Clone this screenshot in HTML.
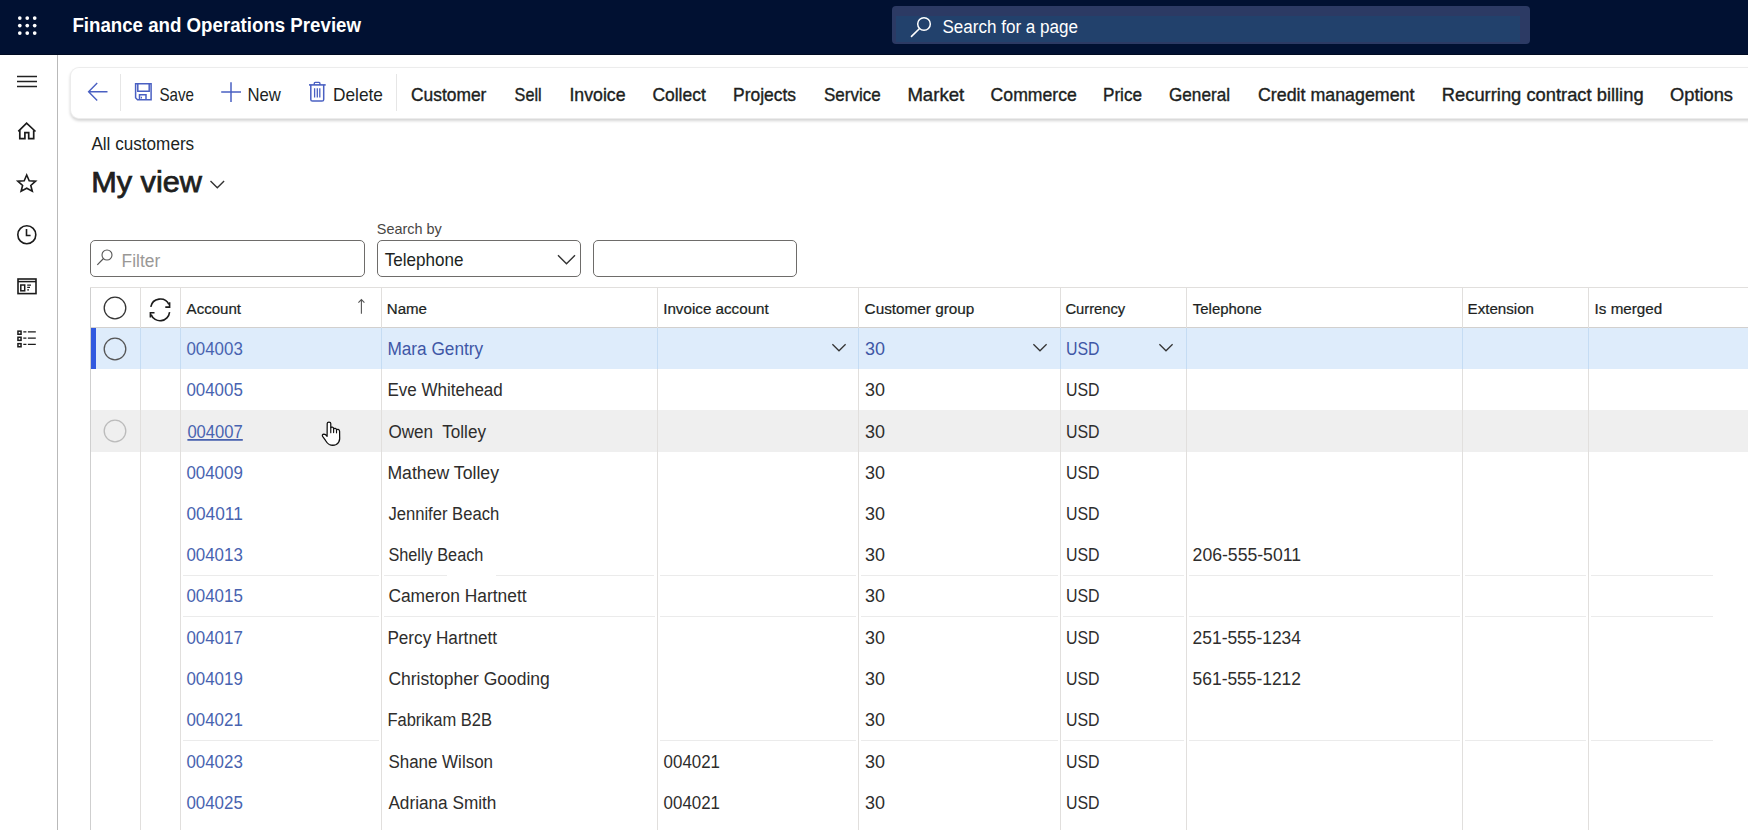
<!DOCTYPE html>
<html><head><meta charset="utf-8"><title>All customers</title>
<style>
html,body{margin:0;padding:0;}
body{width:1748px;height:830px;overflow:hidden;position:relative;background:#fff;font-family:"Liberation Sans", sans-serif;}
.r{position:absolute;display:block;}
#txt{position:absolute;left:0;top:0;}
</style></head><body>
<div class="r" style="left:0px;top:0px;width:1748px;height:55px;background:#011132"></div>
<div class="r" style="left:0px;top:54px;width:1748px;height:1px;background:#000b22"></div>
<svg class="r" style="left:0px;top:0px;" width="56" height="54" viewBox="0 0 56 54" fill="none"><circle cx="19.80" cy="18.10" r="1.85" fill="#fff"/><circle cx="19.80" cy="25.60" r="1.85" fill="#fff"/><circle cx="19.80" cy="33.10" r="1.85" fill="#fff"/><circle cx="27.25" cy="18.10" r="1.85" fill="#fff"/><circle cx="27.25" cy="25.60" r="1.85" fill="#fff"/><circle cx="27.25" cy="33.10" r="1.85" fill="#fff"/><circle cx="34.70" cy="18.10" r="1.85" fill="#fff"/><circle cx="34.70" cy="25.60" r="1.85" fill="#fff"/><circle cx="34.70" cy="33.10" r="1.85" fill="#fff"/></svg>
<div class="r" style="left:892px;top:6px;width:638px;height:38px;background:#2c3a64;border-radius:4px"></div>
<div class="r" style="left:896px;top:16px;width:624px;height:26px;background:#22416c"></div>
<svg class="r" style="left:900px;top:8px;" width="36" height="36" viewBox="0 0 36 36" fill="none"><circle cx="24" cy="16" r="6.3" stroke="#fff" stroke-width="1.5"/><path d="M19.3 20.7 L11.5 28.4" stroke="#fff" stroke-width="1.6" stroke-linecap="round"/></svg>
<div class="r" style="left:57px;top:55px;width:1px;height:775px;background:#b9b9b9"></div>
<svg class="r" style="left:14px;top:70px;" width="28" height="24" viewBox="0 0 28 24" fill="none"><path d="M3 6.5H23M3 11.5H23M3 16.5H23" stroke="#222" stroke-width="1.4"/></svg>
<svg class="r" style="left:14px;top:120px;" width="28" height="24" viewBox="0 0 28 24" fill="none"><path d="M4.3 11.4 L12.6 3.1 L21.5 11.5" stroke="#1b1b1b" stroke-width="1.7"/><path d="M5.8 10.3 V18.6 H10.9 V12.6 H14.7 V18.6 H19.7 V10.3" stroke="#1b1b1b" stroke-width="1.7"/></svg>
<svg class="r" style="left:14px;top:170px;" width="28" height="26" viewBox="0 0 28 26" fill="none"><path d="M12.7 5 L15.2 10.7 L21.6 11.1 L16.8 15.4 L18.3 21.2 L12.7 18.2 L7.1 21.2 L8.6 15.4 L3.8 11.1 L10.2 10.7 Z" stroke="#1b1b1b" stroke-width="1.6" stroke-linejoin="miter"/></svg>
<svg class="r" style="left:14px;top:222px;" width="28" height="26" viewBox="0 0 28 26" fill="none"><circle cx="12.8" cy="12.8" r="9" stroke="#1b1b1b" stroke-width="1.6"/><path d="M12.5 7 V13.5 H16.6" stroke="#1b1b1b" stroke-width="1.6"/></svg>
<svg class="r" style="left:14px;top:275px;" width="28" height="24" viewBox="0 0 28 24" fill="none"><rect x="4" y="4" width="18" height="14.6" stroke="#1b1b1b" stroke-width="1.6"/><path d="M4 6.6 H22" stroke="#1b1b1b" stroke-width="1.5"/><rect x="6.8" y="10" width="3.9" height="5.8" stroke="#1b1b1b" stroke-width="1.5"/><path d="M13.2 10.1H17M13.2 12.4H16M13.2 14.9H15" stroke="#1b1b1b" stroke-width="1.2"/></svg>
<svg class="r" style="left:14px;top:327px;" width="28" height="24" viewBox="0 0 28 24" fill="none"><rect x="3.95" y="4.15" width="3.1" height="3.1" stroke="#1b1b1b" stroke-width="1.5"/><rect x="3.95" y="10.25" width="3.1" height="3.1" stroke="#1b1b1b" stroke-width="1.5"/><rect x="3.95" y="16.65" width="3.1" height="3.1" stroke="#1b1b1b" stroke-width="1.5"/><path d="M9.3 4.9H12.4M13.9 4.9H21.8M9.3 11.1H12.4M13.9 11.1H21.8M9.3 17.4H12.4M13.9 17.4H21.8" stroke="#1b1b1b" stroke-width="1.3"/></svg>
<div class="r" style="left:70px;top:67px;width:1700px;height:52px;background:#fff;border:1px solid #ececec;border-right:none;border-radius:9px 0 0 9px;box-sizing:border-box;box-shadow:0 2px 3px rgba(0,0,0,0.17)"></div>
<svg class="r" style="left:84px;top:78px;" width="30" height="28" viewBox="0 0 30 28" fill="none"><path d="M23.5 13.8 H5 M13.2 5 L4.6 13.8 L13.2 22.4" stroke="#4a60c2" stroke-width="1.4" stroke-linejoin="miter"/></svg>
<div class="r" style="left:120px;top:74px;width:1px;height:37px;background:#e6e6e6"></div>
<svg class="r" style="left:133px;top:81px;" width="22" height="22" viewBox="0 0 22 22" fill="none"><path d="M2.6 2.8 H18.1 V18.7 H4.5 L2.6 16.8 Z" stroke="#4a60c2" stroke-width="1.5" stroke-linejoin="miter"/><path d="M4.8 2.8 V10.3 H16.2 V2.8" stroke="#4a60c2" stroke-width="1.5"/><path d="M6.5 18.7 V13.8 H13 V18.7" stroke="#4a60c2" stroke-width="1.5"/><path d="M8.4 15.8 V17.5" stroke="#4a60c2" stroke-width="1.2"/></svg>
<svg class="r" style="left:219px;top:80px;" width="24" height="24" viewBox="0 0 24 24" fill="none"><path d="M12 2.2 V22 M2.2 12 H22" stroke="#4a60c2" stroke-width="1.5"/></svg>
<svg class="r" style="left:307px;top:80px;" width="22" height="24" viewBox="0 0 22 24" fill="none"><path d="M2 4.9 H18.7" stroke="#4a60c2" stroke-width="1.6"/><path d="M7.3 4.9 V3.2 Q7.3 2.4 8.1 2.4 H12.1 Q12.9 2.4 12.9 3.2 V4.9" stroke="#4a60c2" stroke-width="1.4"/><path d="M3.8 4.9 V19.4 Q3.8 21.1 5.5 21.1 H15 Q16.7 21.1 16.7 19.4 V4.9" stroke="#4a60c2" stroke-width="1.5"/><path d="M7.6 8.2 V17.6 M10.3 8.2 V17.6 M12.8 8.2 V17.6" stroke="#4a60c2" stroke-width="1.3"/></svg>
<div class="r" style="left:396px;top:74px;width:1px;height:37px;background:#e6e6e6"></div>
<svg class="r" style="left:206px;top:176px;" width="22" height="16" viewBox="0 0 22 16" fill="none"><path d="M4.5 5 L11.3 11.8 L18.1 5" stroke="#333" stroke-width="1.4"/></svg>
<div class="r" style="left:90px;top:240px;width:275px;height:37px;border:1px solid #6e6c6a;border-radius:5px;box-sizing:border-box;background:#fff"></div>
<svg class="r" style="left:94px;top:246px;" width="24" height="24" viewBox="0 0 24 24" fill="none"><circle cx="13" cy="9" r="5" stroke="#555" stroke-width="1.1"/><path d="M9.5 12.5 L3.3 18.8" stroke="#555" stroke-width="1.2"/></svg>
<div class="r" style="left:377px;top:240px;width:204px;height:37px;border:1px solid #6e6c6a;border-radius:5px;box-sizing:border-box;background:#fff"></div>
<svg class="r" style="left:552px;top:248px;" width="28" height="22" viewBox="0 0 28 22" fill="none"><path d="M6 7.2 L14.5 15.8 L23 7.2" stroke="#333" stroke-width="1.4"/></svg>
<div class="r" style="left:593px;top:240px;width:204px;height:37px;border:1px solid #6e6c6a;border-radius:5px;box-sizing:border-box;background:#fff"></div>
<div class="r" style="left:90px;top:287px;width:1658px;height:1px;background:#e1dfdd"></div>
<div class="r" style="left:90px;top:327px;width:1658px;height:1px;background:#d2d0ce"></div>
<div class="r" style="left:91px;top:328px;width:1657px;height:41px;background:#deecfb"></div>
<div class="r" style="left:91px;top:328px;width:5px;height:41px;background:#3159df"></div>
<div class="r" style="left:91px;top:410px;width:1657px;height:42px;background:#efefef"></div>
<div class="r" style="left:183px;top:575px;width:196px;height:1px;background:#ebebeb"></div>
<div class="r" style="left:384px;top:575px;width:63px;height:1px;background:#ebebeb"></div>
<div class="r" style="left:496px;top:575px;width:158px;height:1px;background:#ebebeb"></div>
<div class="r" style="left:660px;top:575px;width:196px;height:1px;background:#ebebeb"></div>
<div class="r" style="left:861px;top:575px;width:197px;height:1px;background:#ebebeb"></div>
<div class="r" style="left:1063px;top:575px;width:121px;height:1px;background:#ebebeb"></div>
<div class="r" style="left:1189px;top:575px;width:271px;height:1px;background:#ebebeb"></div>
<div class="r" style="left:1465px;top:575px;width:121px;height:1px;background:#ebebeb"></div>
<div class="r" style="left:1591px;top:575px;width:122px;height:1px;background:#ebebeb"></div>
<div class="r" style="left:183px;top:616px;width:196px;height:1px;background:#ebebeb"></div>
<div class="r" style="left:384px;top:616px;width:271px;height:1px;background:#ebebeb"></div>
<div class="r" style="left:660px;top:616px;width:196px;height:1px;background:#ebebeb"></div>
<div class="r" style="left:861px;top:616px;width:197px;height:1px;background:#ebebeb"></div>
<div class="r" style="left:1063px;top:616px;width:121px;height:1px;background:#ebebeb"></div>
<div class="r" style="left:1189px;top:616px;width:271px;height:1px;background:#ebebeb"></div>
<div class="r" style="left:1465px;top:616px;width:121px;height:1px;background:#ebebeb"></div>
<div class="r" style="left:1591px;top:616px;width:122px;height:1px;background:#ebebeb"></div>
<div class="r" style="left:183px;top:740px;width:196px;height:1px;background:#ebebeb"></div>
<div class="r" style="left:660px;top:740px;width:196px;height:1px;background:#ebebeb"></div>
<div class="r" style="left:861px;top:740px;width:197px;height:1px;background:#ebebeb"></div>
<div class="r" style="left:1063px;top:740px;width:121px;height:1px;background:#ebebeb"></div>
<div class="r" style="left:1189px;top:740px;width:271px;height:1px;background:#ebebeb"></div>
<div class="r" style="left:1465px;top:740px;width:121px;height:1px;background:#ebebeb"></div>
<div class="r" style="left:1591px;top:740px;width:122px;height:1px;background:#ebebeb"></div>
<div class="r" style="left:90px;top:288px;width:1px;height:542px;background:#cfcfcf"></div>
<div class="r" style="left:140px;top:288px;width:1px;height:542px;background:#e1dfdd"></div>
<div class="r" style="left:180px;top:288px;width:1px;height:542px;background:#e1dfdd"></div>
<div class="r" style="left:381px;top:288px;width:1px;height:542px;background:#e1dfdd"></div>
<div class="r" style="left:657px;top:288px;width:1px;height:542px;background:#e1dfdd"></div>
<div class="r" style="left:858px;top:288px;width:1px;height:542px;background:#e1dfdd"></div>
<div class="r" style="left:1060px;top:288px;width:1px;height:542px;background:#e1dfdd"></div>
<div class="r" style="left:1186px;top:288px;width:1px;height:542px;background:#e1dfdd"></div>
<div class="r" style="left:1462px;top:288px;width:1px;height:542px;background:#e1dfdd"></div>
<div class="r" style="left:1588px;top:288px;width:1px;height:542px;background:#e1dfdd"></div>
<div class="r" style="left:140px;top:328px;width:1px;height:41px;background:#c5dcf3"></div>
<div class="r" style="left:180px;top:328px;width:1px;height:41px;background:#c5dcf3"></div>
<div class="r" style="left:381px;top:328px;width:1px;height:41px;background:#c5dcf3"></div>
<div class="r" style="left:657px;top:328px;width:1px;height:41px;background:#c5dcf3"></div>
<div class="r" style="left:858px;top:328px;width:1px;height:41px;background:#c5dcf3"></div>
<div class="r" style="left:1060px;top:328px;width:1px;height:41px;background:#c5dcf3"></div>
<div class="r" style="left:1186px;top:328px;width:1px;height:41px;background:#c5dcf3"></div>
<div class="r" style="left:1462px;top:328px;width:1px;height:41px;background:#c5dcf3"></div>
<div class="r" style="left:1588px;top:328px;width:1px;height:41px;background:#c5dcf3"></div>
<svg class="r" style="left:100px;top:293px;" width="30" height="30" viewBox="0 0 30 30" fill="none"><circle cx="15" cy="15" r="10.8" stroke="#333" stroke-width="1.3"/></svg>
<svg class="r" style="left:146px;top:295px;" width="28" height="28" viewBox="0 0 28 28" fill="none"><path d="M4.8 11.9 A9.6 9.6 0 0 1 22.9 9.5" stroke="#1b1b1b" stroke-width="1.6"/><path d="M19.3 12.1 H23.6 V7.3" stroke="#1b1b1b" stroke-width="1.6"/><path d="M23.6 17.2 A9.6 9.6 0 0 1 5.1 19.6" stroke="#1b1b1b" stroke-width="1.6"/><path d="M8.5 17.7 H4.4 V22.5" stroke="#1b1b1b" stroke-width="1.6"/></svg>
<svg class="r" style="left:353px;top:297px;" width="16" height="20" viewBox="0 0 16 20" fill="none"><path d="M8.4 2.6 V16.7 M5.4 5.6 L8.4 2.6 L11.4 5.6" stroke="#555" stroke-width="1.1"/></svg>
<svg class="r" style="left:100px;top:334px;" width="30" height="30" viewBox="0 0 30 30" fill="none"><circle cx="15" cy="15" r="10.8" stroke="#555" stroke-width="1.3"/></svg>
<svg class="r" style="left:100px;top:416px;" width="30" height="30" viewBox="0 0 30 30" fill="none"><circle cx="15" cy="15" r="10.8" stroke="#bbb" stroke-width="1.3"/></svg>
<svg class="r" style="left:830px;top:337px;" width="20" height="20" viewBox="0 0 20 20" fill="none"><path d="M2.4 7.2 L9 13.8 L15.6 7.2" stroke="#333" stroke-width="1.25"/></svg>
<svg class="r" style="left:1031px;top:337px;" width="20" height="20" viewBox="0 0 20 20" fill="none"><path d="M2.4 7.2 L9 13.8 L15.6 7.2" stroke="#333" stroke-width="1.25"/></svg>
<svg class="r" style="left:1157px;top:337px;" width="20" height="20" viewBox="0 0 20 20" fill="none"><path d="M2.4 7.2 L9 13.8 L15.6 7.2" stroke="#333" stroke-width="1.25"/></svg>
<svg class="r" style="left:310px;top:410px;" width="40" height="40" viewBox="0 0 830 830" fill="none"><path d="M355 545 L357 282 Q357 250 394 250 Q431 250 431 282 L431 368 Q440 352 463 355 Q490 360 490 388 L490 395 Q500 378 524 383 Q550 390 550 412 Q562 396 586 402 Q614 410 614 442 L616 600 Q610 680 545 715 Q470 748 400 715 Q355 690 322 632 L262 548 Q242 510 290 503 Q322 503 355 545 Z" fill="#fff" stroke="#111" stroke-width="26" stroke-linejoin="round"/><path d="M431 368 V470 M490 395 V468 M550 412 V474" stroke="#111" stroke-width="24" stroke-linecap="round"/></svg>
<svg id="txt" width="1748" height="830" viewBox="0 0 1748 830" font-family='"Liberation Sans", sans-serif'>
<text x="72.40" y="32" font-size="19.5" fill="#fff" textLength="288.60" lengthAdjust="spacingAndGlyphs" font-weight="bold">Finance and Operations Preview</text>
<text x="942.40" y="33" font-size="18" fill="#fff" textLength="135.60" lengthAdjust="spacingAndGlyphs">Search for a page</text>
<text x="159.40" y="101" font-size="17.8" fill="#201f1e" textLength="34.60" lengthAdjust="spacingAndGlyphs">Save</text>
<text x="247.40" y="101" font-size="17.8" fill="#201f1e" textLength="33.40" lengthAdjust="spacingAndGlyphs">New</text>
<text x="333.00" y="101" font-size="17.8" fill="#201f1e" textLength="50.00" lengthAdjust="spacingAndGlyphs">Delete</text>
<text x="411.00" y="101" font-size="18.2" fill="#201f1e" textLength="75.40" lengthAdjust="spacingAndGlyphs" stroke="#201f1e" stroke-width="0.38">Customer</text>
<text x="514.60" y="101" font-size="18.2" fill="#201f1e" textLength="27.00" lengthAdjust="spacingAndGlyphs" stroke="#201f1e" stroke-width="0.38">Sell</text>
<text x="569.40" y="101" font-size="18.2" fill="#201f1e" textLength="56.20" lengthAdjust="spacingAndGlyphs" stroke="#201f1e" stroke-width="0.38">Invoice</text>
<text x="652.40" y="101" font-size="18.2" fill="#201f1e" textLength="53.40" lengthAdjust="spacingAndGlyphs" stroke="#201f1e" stroke-width="0.38">Collect</text>
<text x="733.00" y="101" font-size="18.2" fill="#201f1e" textLength="63.00" lengthAdjust="spacingAndGlyphs" stroke="#201f1e" stroke-width="0.38">Projects</text>
<text x="824.00" y="101" font-size="18.2" fill="#201f1e" textLength="56.60" lengthAdjust="spacingAndGlyphs" stroke="#201f1e" stroke-width="0.38">Service</text>
<text x="907.40" y="101" font-size="18.2" fill="#201f1e" textLength="56.80" lengthAdjust="spacingAndGlyphs" stroke="#201f1e" stroke-width="0.38">Market</text>
<text x="990.60" y="101" font-size="18.2" fill="#201f1e" textLength="86.20" lengthAdjust="spacingAndGlyphs" stroke="#201f1e" stroke-width="0.38">Commerce</text>
<text x="1103.00" y="101" font-size="18.2" fill="#201f1e" textLength="39.00" lengthAdjust="spacingAndGlyphs" stroke="#201f1e" stroke-width="0.38">Price</text>
<text x="1169.00" y="101" font-size="18.2" fill="#201f1e" textLength="61.00" lengthAdjust="spacingAndGlyphs" stroke="#201f1e" stroke-width="0.38">General</text>
<text x="1258.00" y="101" font-size="18.2" fill="#201f1e" textLength="156.40" lengthAdjust="spacingAndGlyphs" stroke="#201f1e" stroke-width="0.38">Credit management</text>
<text x="1441.80" y="101" font-size="18.2" fill="#201f1e" textLength="201.80" lengthAdjust="spacingAndGlyphs" stroke="#201f1e" stroke-width="0.38">Recurring contract billing</text>
<text x="1670.00" y="101" font-size="18.2" fill="#201f1e" textLength="63.00" lengthAdjust="spacingAndGlyphs" stroke="#201f1e" stroke-width="0.38">Options</text>
<text x="91.40" y="150" font-size="18" fill="#201f1e" textLength="102.80" lengthAdjust="spacingAndGlyphs">All customers</text>
<text x="91.20" y="192" font-size="28.8" fill="#201f1e" textLength="110.80" lengthAdjust="spacingAndGlyphs" stroke="#201f1e" stroke-width="0.75">My view</text>
<text x="121.60" y="267" font-size="18" fill="#9a9896" textLength="38.60" lengthAdjust="spacingAndGlyphs">Filter</text>
<text x="376.80" y="234" font-size="14.8" fill="#484644" textLength="65.00" lengthAdjust="spacingAndGlyphs">Search by</text>
<text x="384.80" y="266" font-size="17.8" fill="#201f1e" textLength="78.80" lengthAdjust="spacingAndGlyphs">Telephone</text>
<text x="186.60" y="314" font-size="15.3" fill="#201f1e" textLength="54.40" lengthAdjust="spacingAndGlyphs" stroke="#201f1e" stroke-width="0.22">Account</text>
<text x="386.80" y="314" font-size="15.3" fill="#201f1e" textLength="40.20" lengthAdjust="spacingAndGlyphs" stroke="#201f1e" stroke-width="0.22">Name</text>
<text x="663.20" y="314" font-size="15.3" fill="#201f1e" textLength="105.60" lengthAdjust="spacingAndGlyphs" stroke="#201f1e" stroke-width="0.22">Invoice account</text>
<text x="864.60" y="314" font-size="15.3" fill="#201f1e" textLength="109.80" lengthAdjust="spacingAndGlyphs" stroke="#201f1e" stroke-width="0.22">Customer group</text>
<text x="1065.40" y="314" font-size="15.3" fill="#201f1e" textLength="59.80" lengthAdjust="spacingAndGlyphs" stroke="#201f1e" stroke-width="0.22">Currency</text>
<text x="1192.80" y="314" font-size="15.3" fill="#201f1e" textLength="69.00" lengthAdjust="spacingAndGlyphs" stroke="#201f1e" stroke-width="0.22">Telephone</text>
<text x="1467.60" y="314" font-size="15.3" fill="#201f1e" textLength="66.40" lengthAdjust="spacingAndGlyphs" stroke="#201f1e" stroke-width="0.22">Extension</text>
<text x="1594.60" y="314" font-size="15.3" fill="#201f1e" textLength="67.60" lengthAdjust="spacingAndGlyphs" stroke="#201f1e" stroke-width="0.22">Is merged</text>
<text x="186.40" y="355" font-size="17.6" fill="#4863b0" textLength="56.40" lengthAdjust="spacingAndGlyphs">004003</text>
<text x="387.40" y="355" font-size="17.6" fill="#3f57a6" textLength="95.80" lengthAdjust="spacingAndGlyphs" xml:space="preserve">Mara Gentry</text>
<text x="865.00" y="355" font-size="17.6" fill="#3f57a6" textLength="20.00" lengthAdjust="spacingAndGlyphs">30</text>
<text x="1066.00" y="355" font-size="17.6" fill="#3f57a6" textLength="33.60" lengthAdjust="spacingAndGlyphs">USD</text>
<text x="186.40" y="396" font-size="17.6" fill="#4863b0" textLength="56.40" lengthAdjust="spacingAndGlyphs">004005</text>
<text x="387.40" y="396" font-size="17.6" fill="#2e2d2c" textLength="115.40" lengthAdjust="spacingAndGlyphs" xml:space="preserve">Eve Whitehead</text>
<text x="865.00" y="396" font-size="17.6" fill="#2e2d2c" textLength="20.00" lengthAdjust="spacingAndGlyphs">30</text>
<text x="1066.00" y="396" font-size="17.6" fill="#2e2d2c" textLength="33.60" lengthAdjust="spacingAndGlyphs">USD</text>
<text x="187.40" y="438" font-size="17.6" fill="#4863b0" textLength="55.40" lengthAdjust="spacingAndGlyphs" text-decoration="underline">004007</text>
<text x="388.40" y="438" font-size="17.6" fill="#2e2d2c" textLength="97.60" lengthAdjust="spacingAndGlyphs" xml:space="preserve">Owen  Tolley</text>
<text x="865.00" y="438" font-size="17.6" fill="#2e2d2c" textLength="20.00" lengthAdjust="spacingAndGlyphs">30</text>
<text x="1066.00" y="438" font-size="17.6" fill="#2e2d2c" textLength="33.60" lengthAdjust="spacingAndGlyphs">USD</text>
<text x="186.40" y="479" font-size="17.6" fill="#4863b0" textLength="56.40" lengthAdjust="spacingAndGlyphs">004009</text>
<text x="387.40" y="479" font-size="17.6" fill="#2e2d2c" textLength="111.60" lengthAdjust="spacingAndGlyphs" xml:space="preserve">Mathew Tolley</text>
<text x="865.00" y="479" font-size="17.6" fill="#2e2d2c" textLength="20.00" lengthAdjust="spacingAndGlyphs">30</text>
<text x="1066.00" y="479" font-size="17.6" fill="#2e2d2c" textLength="33.60" lengthAdjust="spacingAndGlyphs">USD</text>
<text x="186.40" y="520" font-size="17.6" fill="#4863b0" textLength="56.40" lengthAdjust="spacingAndGlyphs">004011</text>
<text x="388.40" y="520" font-size="17.6" fill="#2e2d2c" textLength="110.80" lengthAdjust="spacingAndGlyphs" xml:space="preserve">Jennifer Beach</text>
<text x="865.00" y="520" font-size="17.6" fill="#2e2d2c" textLength="20.00" lengthAdjust="spacingAndGlyphs">30</text>
<text x="1066.00" y="520" font-size="17.6" fill="#2e2d2c" textLength="33.60" lengthAdjust="spacingAndGlyphs">USD</text>
<text x="186.40" y="561" font-size="17.6" fill="#4863b0" textLength="56.40" lengthAdjust="spacingAndGlyphs">004013</text>
<text x="388.40" y="561" font-size="17.6" fill="#2e2d2c" textLength="95.00" lengthAdjust="spacingAndGlyphs" xml:space="preserve">Shelly Beach</text>
<text x="865.00" y="561" font-size="17.6" fill="#2e2d2c" textLength="20.00" lengthAdjust="spacingAndGlyphs">30</text>
<text x="1066.00" y="561" font-size="17.6" fill="#2e2d2c" textLength="33.60" lengthAdjust="spacingAndGlyphs">USD</text>
<text x="1192.60" y="561" font-size="17.6" fill="#2e2d2c" textLength="108.40" lengthAdjust="spacingAndGlyphs">206-555-5011</text>
<text x="186.40" y="602" font-size="17.6" fill="#4863b0" textLength="56.40" lengthAdjust="spacingAndGlyphs">004015</text>
<text x="388.40" y="602" font-size="17.6" fill="#2e2d2c" textLength="138.20" lengthAdjust="spacingAndGlyphs" xml:space="preserve">Cameron Hartnett</text>
<text x="865.00" y="602" font-size="17.6" fill="#2e2d2c" textLength="20.00" lengthAdjust="spacingAndGlyphs">30</text>
<text x="1066.00" y="602" font-size="17.6" fill="#2e2d2c" textLength="33.60" lengthAdjust="spacingAndGlyphs">USD</text>
<text x="186.40" y="644" font-size="17.6" fill="#4863b0" textLength="56.40" lengthAdjust="spacingAndGlyphs">004017</text>
<text x="387.40" y="644" font-size="17.6" fill="#2e2d2c" textLength="109.60" lengthAdjust="spacingAndGlyphs" xml:space="preserve">Percy Hartnett</text>
<text x="865.00" y="644" font-size="17.6" fill="#2e2d2c" textLength="20.00" lengthAdjust="spacingAndGlyphs">30</text>
<text x="1066.00" y="644" font-size="17.6" fill="#2e2d2c" textLength="33.60" lengthAdjust="spacingAndGlyphs">USD</text>
<text x="1192.60" y="644" font-size="17.6" fill="#2e2d2c" textLength="108.40" lengthAdjust="spacingAndGlyphs">251-555-1234</text>
<text x="186.40" y="685" font-size="17.6" fill="#4863b0" textLength="56.40" lengthAdjust="spacingAndGlyphs">004019</text>
<text x="388.40" y="685" font-size="17.6" fill="#2e2d2c" textLength="161.40" lengthAdjust="spacingAndGlyphs" xml:space="preserve">Christopher Gooding</text>
<text x="865.00" y="685" font-size="17.6" fill="#2e2d2c" textLength="20.00" lengthAdjust="spacingAndGlyphs">30</text>
<text x="1066.00" y="685" font-size="17.6" fill="#2e2d2c" textLength="33.60" lengthAdjust="spacingAndGlyphs">USD</text>
<text x="1192.60" y="685" font-size="17.6" fill="#2e2d2c" textLength="108.40" lengthAdjust="spacingAndGlyphs">561-555-1212</text>
<text x="186.40" y="726" font-size="17.6" fill="#4863b0" textLength="56.40" lengthAdjust="spacingAndGlyphs">004021</text>
<text x="387.40" y="726" font-size="17.6" fill="#2e2d2c" textLength="104.60" lengthAdjust="spacingAndGlyphs" xml:space="preserve">Fabrikam B2B</text>
<text x="865.00" y="726" font-size="17.6" fill="#2e2d2c" textLength="20.00" lengthAdjust="spacingAndGlyphs">30</text>
<text x="1066.00" y="726" font-size="17.6" fill="#2e2d2c" textLength="33.60" lengthAdjust="spacingAndGlyphs">USD</text>
<text x="186.40" y="768" font-size="17.6" fill="#4863b0" textLength="56.40" lengthAdjust="spacingAndGlyphs">004023</text>
<text x="388.40" y="768" font-size="17.6" fill="#2e2d2c" textLength="104.60" lengthAdjust="spacingAndGlyphs" xml:space="preserve">Shane Wilson</text>
<text x="663.60" y="768" font-size="17.6" fill="#2e2d2c" textLength="56.40" lengthAdjust="spacingAndGlyphs">004021</text>
<text x="865.00" y="768" font-size="17.6" fill="#2e2d2c" textLength="20.00" lengthAdjust="spacingAndGlyphs">30</text>
<text x="1066.00" y="768" font-size="17.6" fill="#2e2d2c" textLength="33.60" lengthAdjust="spacingAndGlyphs">USD</text>
<text x="186.40" y="809" font-size="17.6" fill="#4863b0" textLength="56.40" lengthAdjust="spacingAndGlyphs">004025</text>
<text x="388.40" y="809" font-size="17.6" fill="#2e2d2c" textLength="108.00" lengthAdjust="spacingAndGlyphs" xml:space="preserve">Adriana Smith</text>
<text x="663.60" y="809" font-size="17.6" fill="#2e2d2c" textLength="56.40" lengthAdjust="spacingAndGlyphs">004021</text>
<text x="865.00" y="809" font-size="17.6" fill="#2e2d2c" textLength="20.00" lengthAdjust="spacingAndGlyphs">30</text>
<text x="1066.00" y="809" font-size="17.6" fill="#2e2d2c" textLength="33.60" lengthAdjust="spacingAndGlyphs">USD</text>
</svg>
</body></html>
